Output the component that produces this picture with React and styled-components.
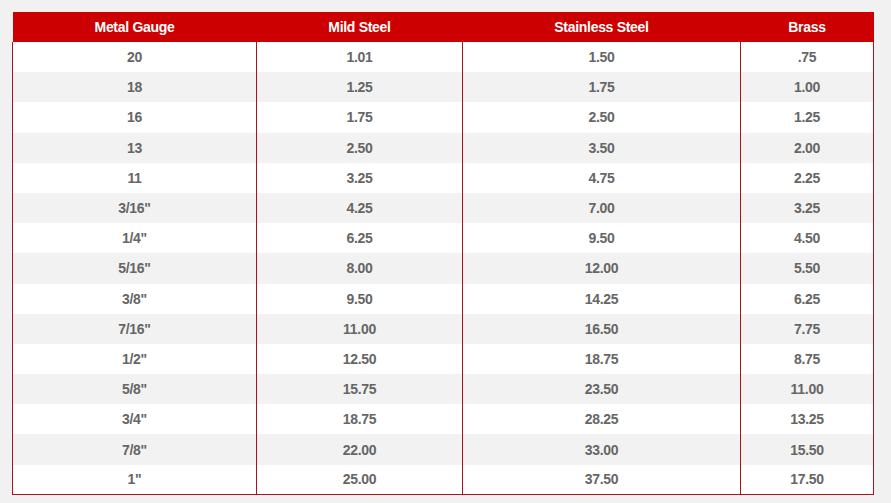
import React from "react";
import styled, { createGlobalStyle } from "styled-components";

const GlobalStyle = createGlobalStyle`
  html, body {
    margin: 0;
    padding: 0;
    background: #f1f1f1;
  }
  body {
    font-family: "Liberation Sans", Arial, sans-serif;
  }
`;

const Page = styled.div`
  padding: 12px;
`;

const Table = styled.table`
  width: 861px;
  table-layout: fixed;
  border-collapse: collapse;
  font-size: 14px;
  letter-spacing: -0.3px;
  font-weight: bold;
  text-align: center;
`;

const HeadCell = styled.th`
  height: 30px;
  padding: 0;
  background: #cc0000;
  color: #fff;
  font-weight: bold;
  vertical-align: middle;
`;

const Row = styled.tr`
  height: 30.2px;
  background: ${(props) => (props.striped ? "#f2f2f2" : "#fff")};
`;

const Cell = styled.td`
  padding: 0;
  color: #666;
  border-left: 1px solid #b0101a;
  border-right: 1px solid #b0101a;
  vertical-align: middle;
`;

const Body = styled.tbody`
  tr:last-child td {
    border-bottom: 1px solid #b0101a;
  }
`;

const columns = [
  { label: "Metal Gauge", width: 244 },
  { label: "Mild Steel", width: 206 },
  { label: "Stainless Steel", width: 278 },
  { label: "Brass", width: 133 },
];

const rows = [
  ["20", "1.01", "1.50", ".75"],
  ["18", "1.25", "1.75", "1.00"],
  ["16", "1.75", "2.50", "1.25"],
  ["13", "2.50", "3.50", "2.00"],
  ["11", "3.25", "4.75", "2.25"],
  ['3/16"', "4.25", "7.00", "3.25"],
  ['1/4"', "6.25", "9.50", "4.50"],
  ['5/16"', "8.00", "12.00", "5.50"],
  ['3/8"', "9.50", "14.25", "6.25"],
  ['7/16"', "11.00", "16.50", "7.75"],
  ['1/2"', "12.50", "18.75", "8.75"],
  ['5/8"', "15.75", "23.50", "11.00"],
  ['3/4"', "18.75", "28.25", "13.25"],
  ['7/8"', "22.00", "33.00", "15.50"],
  ['1"', "25.00", "37.50", "17.50"],
];

export default function App() {
  return (
    <Page>
      <GlobalStyle />
      <Table>
        <colgroup>
          {columns.map((col) => (
            <col key={col.label} style={{ width: col.width }} />
          ))}
        </colgroup>
        <thead>
          <tr>
            {columns.map((col) => (
              <HeadCell key={col.label}>{col.label}</HeadCell>
            ))}
          </tr>
        </thead>
        <Body>
          {rows.map((row, i) => (
            <Row key={row[0]} striped={i % 2 === 1}>
              {row.map((value, j) => (
                <Cell key={j}>{value}</Cell>
              ))}
            </Row>
          ))}
        </Body>
      </Table>
    </Page>
  );
}
